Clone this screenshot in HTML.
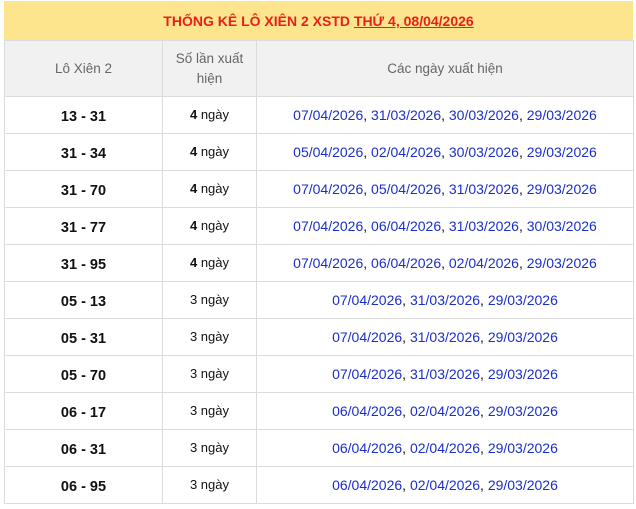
<!DOCTYPE html>
<html><head><meta charset="utf-8"><style>
body{margin:0;background:#fff;font-family:"Liberation Sans",Arial,sans-serif;}
.t{position:absolute;left:4px;top:1px;width:629px;}
.title{height:39px;background:#fde58d;color:#e8201b;font-weight:bold;font-size:14px;text-align:center;line-height:41px;}
.title u{text-decoration:underline;}
table{border-collapse:collapse;width:629px;table-layout:fixed;}
td{border:1px solid #dcdcdc;text-align:center;font-size:14px;height:36px;padding:0;color:#111;}
tr.h td{background:#f1f1f1;color:#666;font-size:13.5px;height:55px;line-height:20px;}
td.a{font-weight:bold;font-size:14.5px;padding-top:3px;height:33px;}
td.b{font-size:13px;padding-bottom:2px;height:34px;}
td.c{color:#111;}
td.c span{color:#1a2fc9;}
</style></head><body>
<div class="t">
<div class="title">THỐNG KÊ LÔ XIÊN 2 XSTD <u>THỨ 4, 08/04/2026</u></div>
<table>
<colgroup><col style="width:158px"><col style="width:94px"><col style="width:377px"></colgroup>
<tr class="h"><td>Lô Xiên 2</td><td>Số lần xuất<br>hiện</td><td>Các ngày xuất hiện</td></tr>
<tr><td class="a">13 - 31</td><td class="b"><b>4</b> ngày</td><td class="c"><span>07/04/2026</span>, <span>31/03/2026</span>, <span>30/03/2026</span>, <span>29/03/2026</span></td></tr>
<tr><td class="a">31 - 34</td><td class="b"><b>4</b> ngày</td><td class="c"><span>05/04/2026</span>, <span>02/04/2026</span>, <span>30/03/2026</span>, <span>29/03/2026</span></td></tr>
<tr><td class="a">31 - 70</td><td class="b"><b>4</b> ngày</td><td class="c"><span>07/04/2026</span>, <span>05/04/2026</span>, <span>31/03/2026</span>, <span>29/03/2026</span></td></tr>
<tr><td class="a">31 - 77</td><td class="b"><b>4</b> ngày</td><td class="c"><span>07/04/2026</span>, <span>06/04/2026</span>, <span>31/03/2026</span>, <span>30/03/2026</span></td></tr>
<tr><td class="a">31 - 95</td><td class="b"><b>4</b> ngày</td><td class="c"><span>07/04/2026</span>, <span>06/04/2026</span>, <span>02/04/2026</span>, <span>29/03/2026</span></td></tr>
<tr><td class="a">05 - 13</td><td class="b">3 ngày</td><td class="c"><span>07/04/2026</span>, <span>31/03/2026</span>, <span>29/03/2026</span></td></tr>
<tr><td class="a">05 - 31</td><td class="b">3 ngày</td><td class="c"><span>07/04/2026</span>, <span>31/03/2026</span>, <span>29/03/2026</span></td></tr>
<tr><td class="a">05 - 70</td><td class="b">3 ngày</td><td class="c"><span>07/04/2026</span>, <span>31/03/2026</span>, <span>29/03/2026</span></td></tr>
<tr><td class="a">06 - 17</td><td class="b">3 ngày</td><td class="c"><span>06/04/2026</span>, <span>02/04/2026</span>, <span>29/03/2026</span></td></tr>
<tr><td class="a">06 - 31</td><td class="b">3 ngày</td><td class="c"><span>06/04/2026</span>, <span>02/04/2026</span>, <span>29/03/2026</span></td></tr>
<tr><td class="a">06 - 95</td><td class="b">3 ngày</td><td class="c"><span>06/04/2026</span>, <span>02/04/2026</span>, <span>29/03/2026</span></td></tr>
</table>
</div>
</body></html>
